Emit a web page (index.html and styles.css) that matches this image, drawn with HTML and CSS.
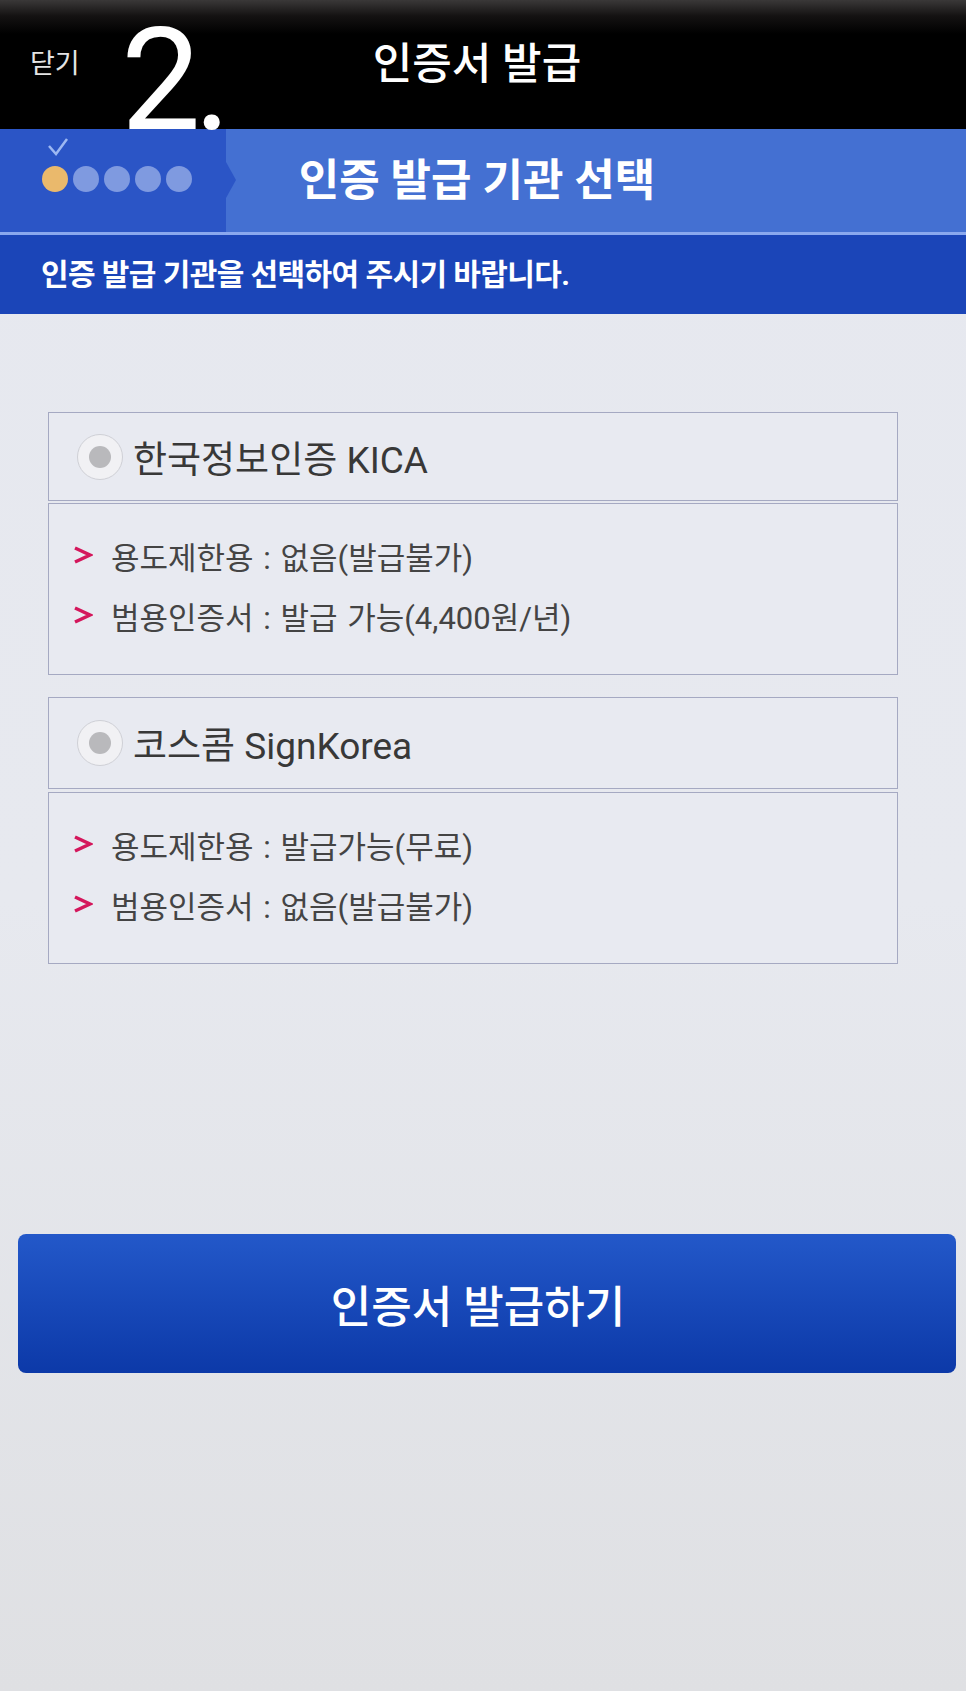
FILE: index.html
```html
<!DOCTYPE html>
<html lang="ko">
<head>
  <meta charset="UTF-8" />
  <meta name="viewport" content="width=device-width, initial-scale=1.0" />
  <title>인증서 발급</title>
  <link rel="stylesheet" href="styles.css">
</head>
<body>
  <header class="topbar">
    <a class="close">닫기</a>
    <h1>인증서 발급</h1>
    <span class="step-no">2.</span>
  </header>

  <div class="stepbar">
    <div class="steps">
      <svg class="check" viewBox="0 0 22 20" width="22" height="20">
        <polyline points="2,9 9,17 20,2" />
      </svg>
      <div class="dots">
        <span class="dot on"></span>
        <span class="dot"></span>
        <span class="dot"></span>
        <span class="dot"></span>
        <span class="dot"></span>
      </div>
    </div>
    <h2>인증 발급 기관 선택</h2>
  </div>
  <p class="notice">인증 발급 기관을 선택하여 주시기 바랍니다.</p>

  <main class="list">
    <div class="ca">
      <label class="ca-head"><span class="radio"></span>한국정보인증 KICA</label>
      <ul class="ca-info">
        <li><svg class="arr" viewBox="0 0 20 20"><polyline points="2,3 17,10 2,17" /></svg>용도제한용 : 없음(발급불가)</li>
        <li><svg class="arr" viewBox="0 0 20 20"><polyline points="2,3 17,10 2,17" /></svg>범용인증서 : 발급 가능(4,400원/년)</li>
      </ul>
    </div>

    <div class="ca second">
      <label class="ca-head"><span class="radio"></span>코스콤 SignKorea</label>
      <ul class="ca-info">
        <li><svg class="arr" viewBox="0 0 20 20"><polyline points="2,3 17,10 2,17" /></svg>용도제한용 : 발급가능(무료)</li>
        <li><svg class="arr" viewBox="0 0 20 20"><polyline points="2,3 17,10 2,17" /></svg>범용인증서 : 없음(발급불가)</li>
      </ul>
    </div>
  </main>

  <button class="issue" type="button">인증서 발급하기</button>
</body>
</html>
```

FILE: styles.css
```css
body {
  margin: 0;
  min-height: 1691px;
  background: linear-gradient(#e6e8ef 0, #e7e9ef 900px, #dfe0e3 1691px);
  font-family: Roboto, "Noto Sans CJK KR", sans-serif;
  color: #333;
}
.topbar {
  position: relative;
  height: 129px;
  display: grid;
  grid-template-columns: 1fr auto 1fr;
  align-items: center;
  background: linear-gradient(#3a3838 0, #141212 16px, #000 34px);
}
.close {
  justify-self: start;
  margin-left: 30px;
  margin-top: -6px;
  font-size: 27px;
  color: #e4e4e4;
}
.topbar h1 {
  margin: 0 12px 0 0;
  font-size: 43px;
  font-weight: 500;
  color: #fff;
  line-height: 1;
}
.step-no {
  position: absolute;
  left: 121px;
  top: 10px;
  font-size: 142px;
  line-height: 1;
  letter-spacing: -7px;
  color: #fff;
  z-index: 2;
}
.stepbar {
  height: 103px;
  display: grid;
  grid-template-columns: 226px 1fr 238px;
  align-items: center;
  background: #4470d2;
  border-bottom: 3px solid #8aa8ee;
}
.steps {
  position: relative;
  height: 103px;
  box-sizing: border-box;
  padding: 8px 0 0 42px;
  background: #2b55c6;
}
.steps::after {
  content: "";
  position: absolute;
  right: -10px;
  top: 33px;
  border-left: 10px solid #2b55c6;
  border-top: 18px solid transparent;
  border-bottom: 18px solid transparent;
}
.check {
  display: block;
  margin: 0 0 9px 5px;
  fill: none;
  stroke: #9db8f2;
  stroke-width: 2.5;
}
.dots {
  display: flex;
  gap: 5px;
}
.dot {
  width: 26px;
  height: 26px;
  border-radius: 50%;
  background: #7f9ae0;
}
.dot.on {
  background: #eab96c;
}
.stepbar h2 {
  margin: 0;
  text-align: center;
  font-size: 44px;
  font-weight: 700;
  color: #fff;
  line-height: 1;
}
.notice {
  margin: 0;
  height: 79px;
  line-height: 79px;
  padding-left: 41px;
  background: #1b45b8;
  color: #fff;
  font-size: 30px;
  font-weight: 700;
  letter-spacing: -0.6px;
}
.list {
  padding: 98px 68px 0 48px;
  display: flex;
  flex-direction: column;
  gap: 22px;
}
.ca-head {
  height: 89px;
  box-sizing: border-box;
  display: flex;
  align-items: center;
  gap: 10px;
  padding-left: 28px;
  border: 1.5px solid #a5a9c2;
  background: #e8eaf1;
  font-size: 37px;
  color: #383838;
}
.second .ca-head {
  height: 92px;
}
.radio {
  width: 46px;
  height: 46px;
  box-sizing: border-box;
  border-radius: 50%;
  border: 1.5px solid #cfd0d6;
  background: #f1f1f4;
  display: flex;
  align-items: center;
  justify-content: center;
}
.radio::after {
  content: "";
  width: 22px;
  height: 22px;
  border-radius: 50%;
  background: #b9b9bc;
}
.ca-info {
  margin: 2px 0 0;
  padding: 21px 0 29px 24px;
  list-style: none;
  border: 1.5px solid #a5a9c2;
  background: #e8eaf1;
}
.second .ca-info {
  margin-top: 3px;
}
.ca-info li {
  height: 60px;
  display: flex;
  align-items: center;
  font-size: 31px;
  word-spacing: 2px;
  color: #444;
}
.arr {
  width: 20px;
  height: 20px;
  margin-right: 18px;
  fill: none;
  stroke: #d4175c;
  stroke-width: 3.5;
}
.issue {
  display: block;
  margin: 270px 10px 0 18px;
  padding: 0 18px 0 0;
  width: 938px;
  height: 139px;
  border: none;
  border-radius: 8px;
  background: linear-gradient(#2358c9, #0c39a8);
  color: #fff;
  font-family: Roboto, "Noto Sans CJK KR", sans-serif;
  font-size: 44px;
  font-weight: 500;
}
```
